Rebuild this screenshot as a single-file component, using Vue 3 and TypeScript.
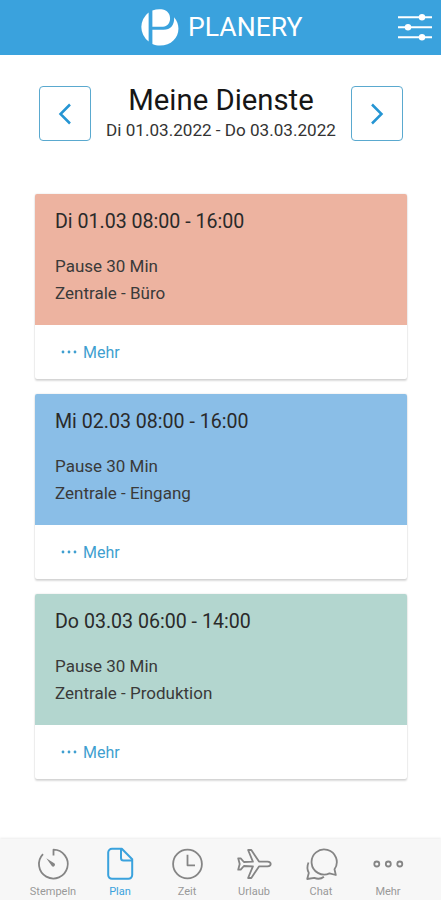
<script setup lang="ts">
interface Shift {
  title: string
  pause: string
  place: string
  tone: string
}

interface Tab {
  label: string
  icon: string
  active?: boolean
}

const shifts: Shift[] = [
  { title: 'Di 01.03 08:00 - 16:00', pause: 'Pause 30 Min', place: 'Zentrale - Büro', tone: 'coral' },
  { title: 'Mi 02.03 08:00 - 16:00', pause: 'Pause 30 Min', place: 'Zentrale - Eingang', tone: 'blue' },
  { title: 'Do 03.03 06:00 - 14:00', pause: 'Pause 30 Min', place: 'Zentrale - Produktion', tone: 'green' },
]

const tabs: Tab[] = [
  { label: 'Stempeln', icon: 'timer' },
  { label: 'Plan', icon: 'file', active: true },
  { label: 'Zeit', icon: 'clock' },
  { label: 'Urlaub', icon: 'plane' },
  { label: 'Chat', icon: 'chat' },
  { label: 'Mehr', icon: 'more' },
]
</script>

<template>
  <div class="screen">
    <header class="topbar">
      <div class="brand">
        <svg class="logo" viewBox="0 0 40 38" width="40" height="38">
          <path d="M8.600 4.500v29A18.600 18.300 0 0 1 8.600 4.500Z" fill="#fff" />
          <path d="M12.400 2.600C17 .9 22.500.9 26 2.800c6 3.400 5.600 15.400-3 15.900H12.400Z" fill="#fff" />
          <path d="M12.400 21.700H23.500c7.500 0 11-5.200 10.600-12.400C44 21 36 37.600 20 37.600c-2.800 0-5.200-.5-7.600-1.500Z" fill="#fff" />
        </svg>
        <span class="name">PLANERY</span>
      </div>
      <svg class="filter" viewBox="0 0 34 28" width="34" height="28">
        <path d="M0 4.200H34M0 14.200H34M0 24.200H34" stroke="#fff" stroke-width="2" />
        <g fill="#fff"><circle cx="24" cy="4.200" r="3.200" /><circle cx="10" cy="14.200" r="3.200" /><circle cx="24" cy="24.200" r="3.200" /></g>
      </svg>
    </header>

    <section class="period">
      <button class="step" type="button" aria-label="Zurück">
        <svg viewBox="0 0 14 22" width="14" height="22"><path d="M12 1.500 2.500 11 12 20.500" /></svg>
      </button>
      <div class="heading">
        <h1>Meine Dienste</h1>
        <p>Di 01.03.2022 - Do 03.03.2022</p>
      </div>
      <button class="step" type="button" aria-label="Weiter">
        <svg viewBox="0 0 14 22" width="14" height="22"><path d="M2 1.500 11.500 11 2 20.500" /></svg>
      </button>
    </section>

    <main class="shifts">
      <article v-for="s in shifts" :key="s.title" class="card">
        <div class="info" :class="s.tone">
          <h2>{{ s.title }}</h2>
          <p>{{ s.pause }}</p>
          <p>{{ s.place }}</p>
        </div>
        <div class="more">
          <svg viewBox="0 0 16 4" width="16" height="4"><circle cx="2" cy="2" r="1.400" /><circle cx="8" cy="2" r="1.400" /><circle cx="14" cy="2" r="1.400" /></svg>
          <span>Mehr</span>
        </div>
      </article>
    </main>

    <nav class="tabs">
      <div v-for="t in tabs" :key="t.label" class="tab" :class="{ active: t.active }">
        <svg viewBox="0 0 36 36" width="36" height="36">
          <template v-if="t.icon === 'timer'">
            <path d="M18.500 9.500V3.700a14.400 14.400 0 1 1-10.500 4.400" />
            <path d="M11.300 12.200l8.300 5.400a1.900 1.900 0 0 1-2.600 2.700Z" class="solid" />
          </template>
          <template v-else-if="t.icon === 'file'">
            <path d="M10 2.800h9.800L30.200 13.200V29a3.800 3.800 0 0 1-3.800 3.800H10A3.800 3.800 0 0 1 6.200 29V6.600A3.800 3.800 0 0 1 10 2.800Z" />
            <path d="M19 3v9a2.500 2.500 0 0 0 2.500 2.500h8.500" />
          </template>
          <template v-else-if="t.icon === 'clock'">
            <circle cx="18.500" cy="18" r="14.400" />
            <path d="M18.500 8.700V19.300h7.500" />
          </template>
          <template v-else-if="t.icon === 'plane'">
            <path d="M2.200 12.300h2.500l3.200 3.700 9-.4L12.100 4h3.200L23 15.600h8.500q3.200.3 3.200 2.400t-3.200 2.400H23L15.300 32h-3.200l4.800-11.600-9-.4-3.200 3.700H2.200L3.700 18Z" />
          </template>
          <template v-else-if="t.icon === 'chat'">
            <path d="M31.500 23.200a12.600 12.600 0 1 0-5 4.200l6.300 1.600Z" />
            <path d="M5.500 16.500c-1.700 4-1.300 7.400.3 10.400L4.200 33l7.100-1.100c4 1.500 7.200.8 9.600-1.200" />
          </template>
          <template v-else>
            <circle cx="6.800" cy="18" r="2.500" /><circle cx="18.300" cy="18" r="2.500" /><circle cx="29.800" cy="18" r="2.500" />
          </template>
        </svg>
        <span>{{ t.label }}</span>
      </div>
    </nav>
  </div>
</template>

<style>
body {
  background: #fff;
}
</style>

<style scoped>
.screen {
  display: flex;
  flex-direction: column;
  height: 900px;
  overflow: hidden;
  background: #fff;
  font-family: Roboto, 'Liberation Sans', sans-serif;
  color: #2a2a2a;
}
h1,
h2,
p {
  margin: 0;
  font-weight: 400;
  white-space: nowrap;
}
.topbar {
  display: flex;
  align-items: center;
  justify-content: space-between;
  box-sizing: border-box;
  height: 54.500px;
  padding: 0 9px 0 140px;
  background: #3aa2dd;
}
.brand {
  display: flex;
  align-items: center;
  gap: 8px;
}
.name {
  color: #fff;
  font-size: 26.600px;
  line-height: 32px;
}
.period {
  display: flex;
  justify-content: space-between;
  height: 55px;
  padding: 31.500px 38px 0 39px;
}
.step {
  display: flex;
  align-items: center;
  justify-content: center;
  box-sizing: border-box;
  width: 52px;
  height: 55px;
  padding: 0;
  border: 1px solid #5aa9cf;
  border-radius: 4px;
  background: #fff;
}
.step path {
  fill: none;
  stroke: #2595d3;
  stroke-width: 2.500;
}
.heading {
  text-align: center;
}
.heading h1 {
  font-size: 29.300px;
  line-height: 28px;
  color: #161616;
}
.heading p {
  margin-top: 6px;
  font-size: 17.100px;
  line-height: 20px;
  color: #333;
}
.shifts {
  display: flex;
  flex-direction: column;
  gap: 15px;
  padding: 53px 34px 0 35px;
}
.card {
  height: 185px;
  border-radius: 2px;
  background: #fff;
  box-shadow: 0 2px 2px rgba(0, 0, 0, 0.14), 0 0 2px rgba(0, 0, 0, 0.14);
  overflow: hidden;
}
.info {
  box-sizing: border-box;
  height: 131px;
  padding: 16px 20px 0;
}
.coral {
  background: #edb3a0;
}
.blue {
  background: #8abee7;
}
.green {
  background: #b3d6cf;
}
.info h2 {
  margin-bottom: 19px;
  font-size: 19.600px;
  line-height: 24px;
}
.info p {
  font-size: 17px;
  line-height: 26.600px;
  color: #3a3a3a;
}
.more {
  display: flex;
  align-items: center;
  gap: 6px;
  height: 54px;
  padding-left: 26px;
  color: #3f9fd0;
  font-size: 16px;
}
.more svg {
  fill: #3f9fd0;
}
.tabs {
  display: grid;
  grid-template-columns: repeat(6, 67px);
  justify-content: center;
  box-sizing: border-box;
  height: 61px;
  margin-top: auto;
  padding-top: 7px;
  background: #f7f7f7;
  box-shadow: 0 -1px 2px rgba(0, 0, 0, 0.08);
}
.tab {
  display: flex;
  flex-direction: column;
  align-items: center;
  color: #999;
  font-size: 11px;
  line-height: 14px;
}
.tab svg {
  margin-bottom: 3px;
  fill: none;
  stroke: #858585;
  stroke-width: 1.800;
  stroke-linejoin: round;
}
.tab .solid {
  fill: #858585;
  stroke: none;
}
.tab.active {
  color: #3aa2dd;
}
.tab.active svg {
  stroke: #3aa2dd;
  stroke-width: 2;
}
</style>
